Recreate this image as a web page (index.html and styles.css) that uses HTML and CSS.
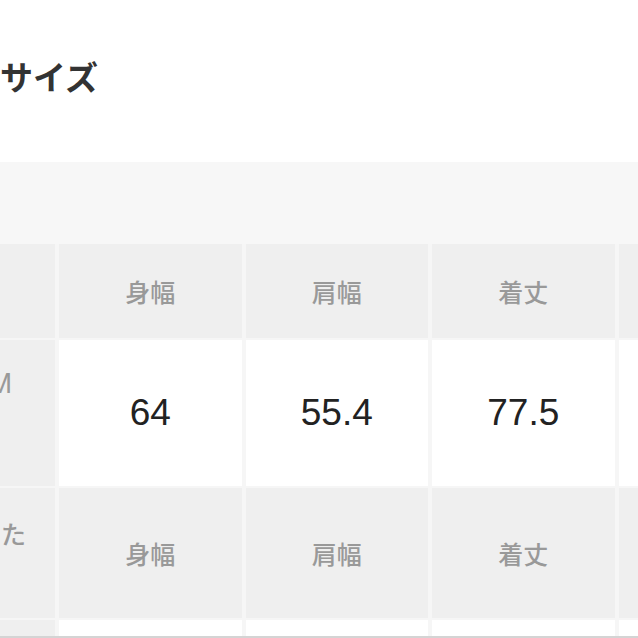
FILE: index.html
```html
<!DOCTYPE html>
<html lang="ja">
<head>
<meta charset="utf-8">
<link rel="stylesheet" href="styles.css">
</head>
<body>
<div class="page">
  <h2 class="title">サイズ</h2>
  <div class="band"></div>
  <div class="grid">
    <div class="side side-h1"></div>
    <div class="head">身幅</div>
    <div class="head">肩幅</div>
    <div class="head">着丈</div>
    <div class="head"></div>

    <div class="side side-d1"><span class="side-m">M</span></div>
    <div class="val">64</div>
    <div class="val">55.4</div>
    <div class="val">77.5</div>
    <div class="val"></div>

    <div class="side side-h2"><span class="side-ta">た</span></div>
    <div class="head head-tall">身幅</div>
    <div class="head head-tall">肩幅</div>
    <div class="head head-tall">着丈</div>
    <div class="head head-tall"></div>

    <div class="side side-d2"></div>
    <div class="val"></div>
    <div class="val"></div>
    <div class="val"></div>
    <div class="val"></div>
  </div>
</div>
</body>
</html>
```
FILE: styles.css
```css
html, body {
  margin: 0;
  padding: 0;
  background: #ffffff;
}

.page {
  width: 638px;
  height: 638px;
  overflow: hidden;
  box-sizing: border-box;
  border-bottom: 2px solid #d4d4d4;
  font-family: "Noto Sans CJK JP", "Noto Sans", sans-serif;
}

.title {
  margin: 59px 0 68px 0;
  height: 35px;
  font-size: 33px;
  line-height: 35px;
  font-weight: 700;
  color: #333333;
  white-space: nowrap;
}

.band {
  height: 82px;
  background: #f7f7f7;
}

.grid {
  display: grid;
  grid-template-columns: 55px 182.5px 182.5px 182.5px 182.5px;
  grid-template-rows: 94px 146px 130px 148px;
  column-gap: 4px;
  row-gap: 2px;
  background: #f6f6f6;
  width: 800px;
}

.side {
  background: #efefef;
  display: flex;
  flex-direction: column;
  justify-content: center;
  align-items: flex-start;
  overflow: hidden;
  font-size: 25px;
  line-height: 30px;
  color: #999999;
}

.side-d1 {
  padding-bottom: 60px;
  box-sizing: border-box;
}

.side-h2 {
  padding-bottom: 40px;
  box-sizing: border-box;
}

.side-m {
  margin-left: -12px;
  font-family: "Liberation Sans", sans-serif;
  font-size: 29px;
}

.side-ta {
  margin-left: 1px;
  font-weight: 500;
}

.head {
  background: #efefef;
  display: flex;
  align-items: center;
  justify-content: center;
  font-size: 25px;
  font-weight: 500;
  color: #999999;
}

.val {
  background: #ffffff;
  display: flex;
  align-items: center;
  justify-content: center;
  font-family: "Liberation Sans", "Noto Sans", sans-serif;
  font-size: 37px;
  color: #222222;
}
```
